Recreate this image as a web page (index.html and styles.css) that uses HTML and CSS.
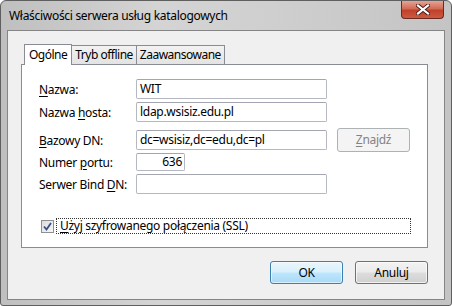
FILE: index.html
```html
<!DOCTYPE html>
<html lang="pl">
<head>
<meta charset="UTF-8">
<title>Właściwości serwera usług katalogowych</title>
<link rel="stylesheet" href="styles.css">
</head>
<body>
<div class="window">
  <div class="titlebar">
    <span class="title">Właściwości serwera usług katalogowych</span>
    <div class="close">
      <svg width="14" height="11" viewBox="0 0 14 11">
        <path d="M2 1.5 L12 9.5 M12 1.5 L2 9.5" stroke="#4a1a14" stroke-width="4" stroke-linecap="square"/>
        <path d="M2 1.5 L12 9.5 M12 1.5 L2 9.5" stroke="#fff" stroke-width="2.2" stroke-linecap="square"/>
      </svg>
    </div>
  </div>
  <div class="client">
    <div class="tabs">
      <div class="tab active">Ogólne</div>
      <div class="tab">Tryb offline</div>
      <div class="tab">Zaawansowane</div>
    </div>
    <div class="panel">
      <div class="row r1">
        <span class="label"><u>N</u>azwa:</span>
        <div class="textbox">WIT</div>
      </div>
      <div class="row r2">
        <span class="label">Nazwa <u>h</u>osta:</span>
        <div class="textbox">ldap.wsisiz.edu.pl</div>
      </div>
      <div class="row r3">
        <span class="label"><u>B</u>azowy DN:</span>
        <div class="textbox">dc=wsisiz,dc=edu,dc=pl</div>
        <div class="btn disabled"><u>Z</u>najdź</div>
      </div>
      <div class="row r4">
        <span class="label">Numer <u>p</u>ortu:</span>
        <div class="textbox port">636</div>
      </div>
      <div class="row r5">
        <span class="label">Serwer Bind <u>D</u>N:</span>
        <div class="textbox"></div>
      </div>
      <div class="check-row">
        <span class="checkbox">
          <svg width="9" height="9" viewBox="0 0 9 9">
            <path d="M1 4.5 L3.5 7.5 L8 1" fill="none" stroke="#3b4f86" stroke-width="1.8"/>
          </svg>
        </span>
        <span class="check-label"><u>U</u>żyj szyfrowanego połączenia (SSL)</span>
      </div>
    </div>
    <div class="buttons">
      <div class="btn default">OK</div>
      <div class="btn">Anuluj</div>
    </div>
  </div>
</div>
</body>
</html>
```

FILE: styles.css
```css
body { margin: 0; font-family: "Noto Sans", "Open Sans", sans-serif; font-size: 12px; letter-spacing: -0.3px; color: #000; background: #fff; }
u { text-decoration: underline; text-underline-offset: 2px; }

.window { width: 452px; height: 306px; box-sizing: border-box; border: 1px solid #5f5f5f; border-radius: 6px 6px 3px 3px; background: linear-gradient(90deg, #bfbfbf 0%, #d4d4d4 35%, #cfcfcf 60%, #c4c4c4 100%); display: flex; flex-direction: column; overflow: hidden; }
.titlebar { height: 29px; display: flex; align-items: flex-start; justify-content: space-between; }
.title { margin: 7px 0 0 8px; line-height: 16px; color: #000; }
.close { width: 43px; height: 18px; margin-right: 7px; box-sizing: border-box; border: 1px solid #6a2a22; border-top: 0; border-radius: 0 0 4px 4px; background: linear-gradient(#e8a293 0%, #d16b57 45%, #c2402a 55%, #cb5a41 100%); display: flex; align-items: center; justify-content: center; }

.client { flex: 1; margin: 0 6px 5px 6px; border: 1px solid #858585; background: #f0f0f0; padding: 0 16px 0 13px; display: flex; flex-direction: column; }

.tabs { display: flex; margin-top: 12px; padding-left: 3px; height: 21px; align-items: flex-end; letter-spacing: -0.5px; }
.tab { height: 19px; box-sizing: border-box; border: 1px solid #898c95; border-bottom: 0; border-left: 0; padding: 0 3px; line-height: 18px; background: linear-gradient(#f2f2f2, #e3e3e3); }
.tab.active { height: 21px; border-left: 1px solid #898c95; background: #fff; margin-bottom: -1px; position: relative; z-index: 1; padding: 0 4px 0 4px; line-height: 20px; }

.panel { height: 184px; box-sizing: border-box; border: 1px solid #898c95; background: #fff; padding: 14px 0 0 17px; }

.row { display: flex; align-items: center; height: 20px; }
.r2 { margin-top: 3px; }
.r3 { margin-top: 8px; }
.r4 { margin-top: 3px; height: 18px; }
.r5 { margin-top: 3px; }
.label { width: 97px; flex: none; white-space: nowrap; }
.textbox { width: 191px; height: 100%; box-sizing: border-box; border: 1px solid #b5b8c1; border-top-color: #a3a6ae; border-radius: 2px; padding: 0 3px; line-height: 18px; white-space: nowrap; }
.textbox.port { width: 49px; text-align: right; padding-right: 2px; line-height: 16px; }

.btn { height: 23px; width: 73px; box-sizing: border-box; border: 1px solid #707070; border-radius: 3px; background: linear-gradient(#f2f2f2 0%, #ebebeb 48%, #dddddd 52%, #cfcfcf 100%); text-align: center; line-height: 21px; flex: none; box-shadow: inset 0 0 0 1px rgba(255,255,255,0.7); }
.row .btn { height: 24px; margin-left: 10px; }
.btn.disabled { border-color: #adb2b5; background: #f4f4f4; color: #838383; box-shadow: none; }
.btn.default { border-color: #3c7fb1; background: linear-gradient(#eaf6fd 0%, #d9f0fc 48%, #bee6fd 52%, #a7d9f5 100%); box-shadow: inset 0 0 0 1px rgba(255,255,255,0.6); }

.check-row { display: flex; align-items: center; margin-top: 24px; height: 16px; }
.checkbox { width: 13px; height: 13px; margin-left: 2px; box-sizing: border-box; border: 1px solid #8e8f8f; background: linear-gradient(135deg, #dcdcdc, #f7f7f7); display: flex; align-items: center; justify-content: center; }
.check-label { margin-left: 2px; width: 355px; height: 16px; box-sizing: border-box; border: 1px dotted #333; padding-left: 3px; line-height: 14px; }

.buttons { display: flex; justify-content: flex-end; gap: 12px; margin-top: 13px; }
```
